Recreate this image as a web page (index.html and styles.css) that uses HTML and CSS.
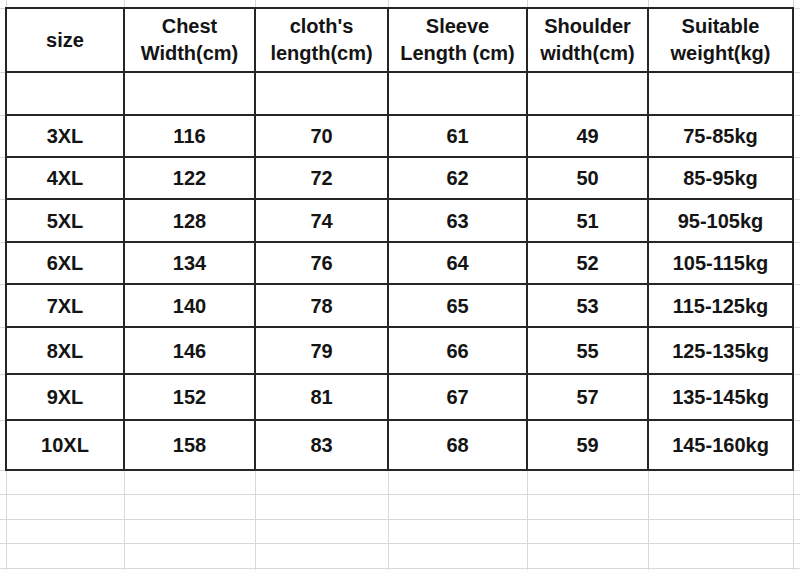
FILE: index.html
```html
<!DOCTYPE html>
<html>
<head>
<meta charset="utf-8">
<link rel="stylesheet" href="styles.css">
</head>
<body>
<table class="sheet">
  <colgroup>
    <col class="w-gl"><col class="w-size"><col class="w-chest"><col class="w-len"><col class="w-sleeve"><col class="w-shoulder"><col class="w-weight"><col class="w-gr">
  </colgroup>
  <tr class="r-top"><td class="gl"></td><td></td><td></td><td></td><td></td><td></td><td></td><td class="gr"></td></tr>
  <tr class="r-head"><td class="gl"></td><th class="d">size</th><th class="d">Chest<br>Width(cm)</th><th class="d">cloth's<br>length(cm)</th><th class="d">Sleeve<br>Length (cm)</th><th class="d">Shoulder<br>width(cm)</th><th class="d">Suitable<br>weight(kg)</th><td class="gr"></td></tr>
  <tr class="r-empty"><td class="gl"></td><td class="d"></td><td class="d"></td><td class="d"></td><td class="d"></td><td class="d"></td><td class="d"></td><td class="gr"></td></tr>
  <tr class="r-42"><td class="gl"></td><td class="d">3XL</td><td class="d">116</td><td class="d">70</td><td class="d">61</td><td class="d">49</td><td class="d">75-85kg</td><td class="gr"></td></tr>
  <tr class="r-42"><td class="gl"></td><td class="d">4XL</td><td class="d">122</td><td class="d">72</td><td class="d">62</td><td class="d">50</td><td class="d">85-95kg</td><td class="gr"></td></tr>
  <tr class="r-43"><td class="gl"></td><td class="d">5XL</td><td class="d">128</td><td class="d">74</td><td class="d">63</td><td class="d">51</td><td class="d">95-105kg</td><td class="gr"></td></tr>
  <tr class="r-42"><td class="gl"></td><td class="d">6XL</td><td class="d">134</td><td class="d">76</td><td class="d">64</td><td class="d">52</td><td class="d">105-115kg</td><td class="gr"></td></tr>
  <tr class="r-43"><td class="gl"></td><td class="d">7XL</td><td class="d">140</td><td class="d">78</td><td class="d">65</td><td class="d">53</td><td class="d">115-125kg</td><td class="gr"></td></tr>
  <tr class="r-47"><td class="gl"></td><td class="d">8XL</td><td class="d">146</td><td class="d">79</td><td class="d">66</td><td class="d">55</td><td class="d">125-135kg</td><td class="gr"></td></tr>
  <tr class="r-46"><td class="gl"></td><td class="d">9XL</td><td class="d">152</td><td class="d">81</td><td class="d">67</td><td class="d">57</td><td class="d">135-145kg</td><td class="gr"></td></tr>
  <tr class="r-50"><td class="gl"></td><td class="d">10XL</td><td class="d">158</td><td class="d">83</td><td class="d">68</td><td class="d">59</td><td class="d">145-160kg</td><td class="gr"></td></tr>
  <tr class="r-g24"><td class="gl"></td><td></td><td></td><td></td><td></td><td></td><td></td><td class="gr"></td></tr>
  <tr class="r-g25"><td class="gl"></td><td></td><td></td><td></td><td></td><td></td><td></td><td class="gr"></td></tr>
  <tr class="r-g24"><td class="gl"></td><td></td><td></td><td></td><td></td><td></td><td></td><td class="gr"></td></tr>
  <tr class="r-g25"><td class="gl"></td><td></td><td></td><td></td><td></td><td></td><td></td><td class="gr"></td></tr>
  <tr class="r-g24"><td class="gl"></td><td></td><td></td><td></td><td></td><td></td><td></td><td class="gr"></td></tr>
</table>
</body>
</html>
```
FILE: styles.css
```css
html, body {
  margin: 0;
  padding: 0;
  background: #ffffff;
  overflow: hidden;
}

.sheet {
  border-collapse: collapse;
  table-layout: fixed;
  width: 800px;
  font-family: "Liberation Sans", Arial, sans-serif;
  font-weight: bold;
  font-size: 20px;
  color: #141414;
}

.w-gl { width: 6px; }
.w-size { width: 118px; }
.w-chest { width: 131px; }
.w-len { width: 133px; }
.w-sleeve { width: 139px; }
.w-shoulder { width: 121px; }
.w-weight { width: 145px; }
.w-gr { width: 7px; }

.sheet td,
.sheet th {
  border: 1px solid #d8d8d8;
  padding: 0;
  text-align: center;
  vertical-align: middle;
  white-space: nowrap;
  overflow: hidden;
}

.sheet .d {
  border: 2px solid #262626;
  font-weight: bold;
  line-height: 22px;
}

.sheet th.d {
  line-height: 27px;
}

.sheet .gl { border-left: none; }
.sheet .gr { border-right: none; }
.r-top td { border-top: none; }

.r-top { height: 8px; }
.r-head { height: 64px; }
.r-empty { height: 43px; }
.r-42 { height: 42px; }
.r-43 { height: 43px; }
.r-46 { height: 46px; }
.r-47 { height: 47px; }
.r-50 { height: 50px; }
.r-g24 { height: 24px; }
.r-g25 { height: 25px; }
```
